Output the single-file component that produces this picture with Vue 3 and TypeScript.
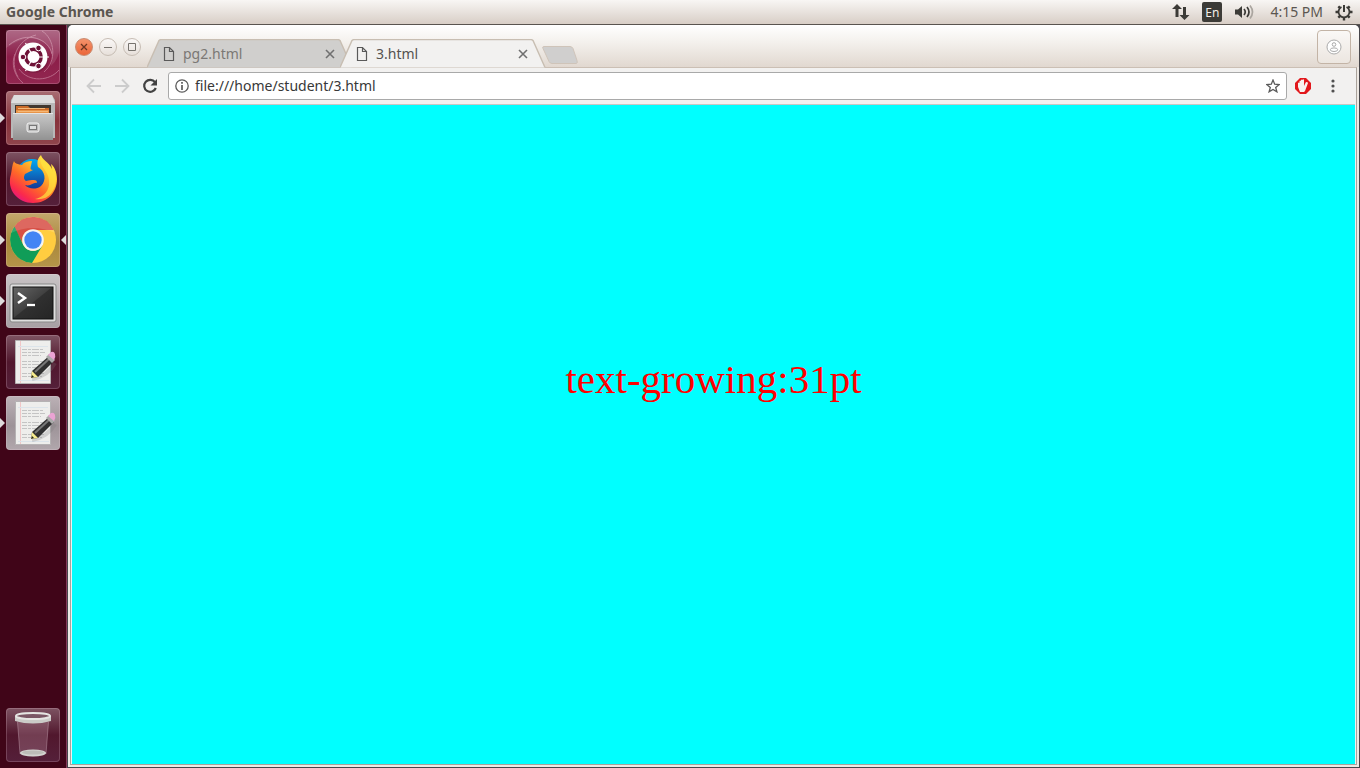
<script setup lang="ts">
import { ref } from 'vue'

interface Launcher { id: string; name: string; running: boolean }
interface Tab { id: number; title: string }

const launchers: Launcher[] = [
  { id: 'dash', name: 'Search your computer', running: false },
  { id: 'files', name: 'Files', running: true },
  { id: 'firefox', name: 'Firefox', running: false },
  { id: 'chrome', name: 'Google Chrome', running: true },
  { id: 'terminal', name: 'Terminal', running: true },
  { id: 'editor', name: 'Text Editor', running: false },
  { id: 'notes', name: 'Text Editor', running: true },
  { id: 'trash', name: 'Trash', running: false },
]
const tabs: Tab[] = [
  { id: 1, title: 'pg2.html' },
  { id: 2, title: '3.html' },
]
const activeTab = ref(2)
const address = ref('file:///home/student/3.html')
const fontPoints = ref(31)
</script>

<template>
  <div class="desktop">
    <header class="panel">
      <span class="app-name">Google Chrome</span>
      <div class="indicators">
        <button class="indicator" aria-label="Network">
          <svg width="18" height="18" viewBox="0 0 18 18" fill="#3c3b37"><path d="M5 1 10 6H6.500v8h-3V6H0zM12.500 17 7.500 12H11V4h3v8h3.500z" /></svg>
        </button>
        <button class="indicator lang" aria-label="Keyboard layout">En</button>
        <button class="indicator" aria-label="Sound">
          <svg width="20" height="16" viewBox="0 0 20 16" fill="none" stroke-width="1.700">
            <path d="M1 5.500h3L8 2v12l-4-3.500H1z" fill="#3c3b37" />
            <path d="M10 5q2.500 3 0 6M13 3q4 5 0 10" stroke="#3c3b37" /><path d="M16 1.500q5 6.500 0 13" stroke="#aaa59f" />
          </svg>
        </button>
        <button class="indicator clock">4:15 PM</button>
        <button class="indicator" aria-label="Session">
          <svg width="18" height="18" viewBox="0 0 18 18" fill="none" stroke="#3c3b37">
            <path d="M6.500 4a5.500 5.500 0 1 0 5 0" stroke-width="1.800" />
            <path d="M9 2v7" stroke-width="2" />
            <path d="M3.300 3.300 5.200 5.200M14.700 3.300 12.800 5.200M.500 9h3M14.500 9h3M3.300 14.700 5.200 12.800M14.700 14.700 12.800 12.800M9 14.500v3" stroke-width="2.400" />
          </svg>
        </button>
      </div>
    </header>

    <div class="workspace">
      <nav class="launcher" aria-label="Launcher">
        <button v-for="item in launchers" :key="item.id" class="tile" :class="[item.id, { running: item.running, focused: item.id === 'chrome' }]" :aria-label="item.name">
          <svg v-if="item.id === 'dash'" viewBox="0 0 54 54">
            <g fill="none" stroke="#ffdde9" stroke-width="1" opacity=".36">
              <path d="M12 47C3 31 10 10 30 5" /><path d="M3 15C21 0 43 9 46 24" /><path d="M17 53C8 46 5 33 9 24" /><path d="M53 40C44 51 23 53 13 39" /><path d="M36 1C49 9 51 31 38 42" />
            </g>
            <path d="M0 18Q25 0 41 15Q48 24 45 36Q54 28 54 14V0H0z" fill="#fff" opacity=".12" />
            <circle cx="28" cy="28.500" r="14.500" fill="#4a0b25" opacity=".25" />
            <circle cx="27" cy="27" r="14.500" fill="#fff" />
            <circle cx="27.500" cy="27" r="7.700" fill="none" stroke="#6e1237" stroke-width="3.400" />
            <path d="M27.500 27H43M27.500 27 19.500 13M27.500 27 19.500 41" stroke="#fff" stroke-width="1.200" />
            <g fill="#6e1237" stroke="#fff" stroke-width="1"><circle cx="17" cy="27" r="2.800" /><circle cx="32.500" cy="18" r="2.800" /><circle cx="32.500" cy="36" r="2.800" /></g>
          </svg>
          <svg v-else-if="item.id === 'files'" viewBox="0 0 54 54">
            <defs><linearGradient id="cab" x2="0" y2="1"><stop stop-color="#c9c9c9" /><stop offset="1" stop-color="#929292" /></linearGradient></defs>
            <path d="M8 4h38l3 5v38H5V9z" fill="#b8b8b8" /><path d="M8 4h38l3 8H5z" fill="#dedede" />
            <path d="M9 14h36v9H9z" fill="#41372f" />
            <path d="M10 15h12l2 2h19v6H10z" fill="#c96a28" /><path d="M10 19h33v4H10z" fill="#e89448" /><path d="M12 17.500h27M12 20.500h30" stroke="#f5b877" />
            <path d="M7 22h40v27H7z" fill="url(#cab)" /><path d="M7 22.500h40" stroke="#e4e4e4" />
            <rect x="21" y="32" width="12" height="9" rx="2" fill="#bbb" stroke="#f4f4f4" /><rect x="23.500" y="34.500" width="7" height="4" fill="#ddd" stroke="#777" />
          </svg>
          <svg v-else-if="item.id === 'firefox'" viewBox="0 0 54 54">
            <defs>
              <linearGradient id="fox" x1=".85" y1="0" x2=".15" y2=".95"><stop stop-color="#fff44f" /><stop offset=".35" stop-color="#ffb52a" /><stop offset=".6" stop-color="#ff6a28" /><stop offset=".85" stop-color="#fb2a4c" /><stop offset="1" stop-color="#e31587" /></linearGradient>
              <linearGradient id="globe" x2="0" y2="1"><stop stop-color="#00aaf4" /><stop offset="1" stop-color="#182f8d" /></linearGradient>
            </defs>
            <circle cx="26" cy="23" r="16" fill="url(#globe)" />
            <path d="M35 3C31 7 31 11 32 15C39 19 41 28 35 34C30 38 22 37 19 33C25 35 27 30 31 31C31 27 27 28 20 29C17 27 18 24 19 22L27 18C23 18 25 15 26 9C22 9 18 10 16 13C12 12 9 12 8 9C6 13 6 17 5 22C0 38 12 51 27 51C42 51 51 40 51 27C51 20 48 14 45 12L46 17C43 10 36 8 35 3Z" fill="url(#fox)" />
            <path d="M35 4C32 17 45 18 43 33C42 41 35 46 29 47C42 49 50 39 50 27C50 20 48 15 46 14L47 20C44 12 36 9 35 4Z" fill="#ffe340" opacity=".7" />
          </svg>
          <svg v-else-if="item.id === 'chrome'" viewBox="0 0 54 54">
            <circle cx="27" cy="27" r="23" fill="#ffcd40" />
            <path d="M8 14A23 23 0 0 1 47.800 17H27A10 10 0 0 0 17 31z" fill="#d85046" />
            <path d="M8.500 13.500A23 23 0 0 0 26 50L36.500 32.500A11 11 0 0 1 17.500 32.500z" fill="#109d58" />
            <path d="M5 20A23 23 0 0 1 49 20Q27 10 5 20z" fill="#fff" opacity=".14" />
            <circle cx="27" cy="27" r="10.800" fill="#f4f4f4" /><circle cx="27" cy="27" r="8.700" fill="#4285f4" />
          </svg>
          <svg v-else-if="item.id === 'terminal'" viewBox="0 0 54 54">
            <defs><linearGradient id="screen" x2="1" y2="1"><stop stop-color="#666" /><stop offset=".48" stop-color="#414141" /><stop offset=".5" stop-color="#303030" /><stop offset="1" stop-color="#252525" /></linearGradient></defs>
            <rect x="4" y="10" width="46" height="38" rx="2" fill="#dedede" stroke="#898989" /><rect x="7" y="13" width="40" height="32" fill="url(#screen)" stroke="#111" />
            <path d="m12 19 7 5-7 5" fill="none" stroke="#fff" stroke-width="2.500" /><path d="M21 31h8" stroke="#fff" stroke-width="2.300" />
          </svg>
          <svg v-else-if="item.id === 'editor' || item.id === 'notes'" viewBox="0 0 54 54">
            <path d="M9.500 5.500h35v43h-35z" fill="#eeeeec" stroke="#b5b2b3" />
            <path d="M14.500 6v42" stroke="#f0c6c6" /><path d="M12 11.500h30M12 45.500h31" stroke="#dce4ea" />
            <path d="M16 14.500h21M16 17.500h23M16 20.500h19M16 26.500h23M16 29.500h20M16 32.500h22M16 38.500h22M16 41.500h20" stroke="#c4c4c4" stroke-dasharray="5 1 3 1 7 1" />
            <path d="M26 44Q42 41 49 28" stroke="#777" stroke-width="4" opacity=".25" fill="none" />
            <path d="m25 43 1-7 17-15 5 5-16 16z" fill="#303030" /><path d="m29 37 15-14" stroke="#777" stroke-width="2" />
            <path d="m25 43 1-7 6 6z" fill="#f7ec8b" /><path d="m25 43 1-3 2 2z" fill="#222" />
            <path d="m40 22 3-3 6 6-3 3z" fill="#aaa" /><path d="m42 20 3-3q3-1 4 2t-1 6z" fill="#eaa3d4" />
          </svg>
          <svg v-else viewBox="0 0 54 54">
            <path d="M11 10 14 46Q27 51 40 46L43 10z" fill="#d8aebf" opacity=".25" /><path d="M11.500 14 14 46M42.500 14 40 46" stroke="#d9bcc8" opacity=".35" />
            <ellipse cx="27" cy="45" rx="13" ry="3.500" fill="#d3d3d0" /><ellipse cx="27" cy="44.500" rx="11" ry="2" fill="#bcbcb8" />
            <path d="M9 8q18 6 36 0v5q-18 5-36 0z" fill="#cbcbc8" /><ellipse cx="27" cy="8" rx="17" ry="3" fill="#7a5664" stroke="#e5e5e2" stroke-width="2" />
          </svg>
        </button>
      </nav>

      <section class="window" aria-label="Google Chrome">
        <div class="tab-strip">
          <div class="window-controls">
            <button class="control close" aria-label="Close window"><svg width="16" height="16" viewBox="0 0 16 16"><path d="m5 5 6 6M11 5l-6 6" stroke="#6b3521" stroke-width="1.300" /></svg></button>
            <button class="control" aria-label="Minimize"><svg width="16" height="16" viewBox="0 0 16 16"><path d="M4 8.500h8" stroke="#77736e" /></svg></button>
            <button class="control" aria-label="Maximize"><svg width="16" height="16" viewBox="0 0 16 16"><path d="M4.500 4.500h7v7h-7z" fill="none" stroke="#77736e" /></svg></button>
          </div>
          <div class="tabs">
            <div v-for="tab in tabs" :key="tab.id" class="tab" :class="{ active: tab.id === activeTab }">
              <svg class="tab-shape" viewBox="0 0 206 29" preserveAspectRatio="none"><path d="M0 28.500 12 1.500q1-1 2-1H191q1 0 2 1L205 28.500" /></svg>
              <button class="tab-main" @click="activeTab = tab.id">
                <svg width="12" height="16" viewBox="0 0 12 16"><path d="M1.500 1.500h5l4 4v9h-9zM6.500 1.500v4h4" fill="none" stroke="#5a5a5a" stroke-width="1.200" /></svg>
                <span>{{ tab.title }}</span>
              </button>
              <button class="tab-close" :aria-label="`Close ${tab.title}`"><svg width="10" height="10" viewBox="0 0 10 10"><path d="m1 1 8 8M9 1 1 9" stroke="#707070" stroke-width="1.600" /></svg></button>
            </div>
            <button class="new-tab" aria-label="New tab"><svg width="36" height="18" viewBox="0 0 36 18"><path d="M2 .500h26q2 0 3 2l4 12q1 3-1 3H10q-2 0-3-2L1 2.500q-1-2 1-2" fill="#d0cfce" stroke="#cfc4b9" /></svg></button>
          </div>
          <button class="profile" aria-label="Profile"><svg width="16" height="16" viewBox="0 0 16 16" fill="none" stroke="#aaa"><circle cx="8" cy="8" r="7" fill="#fff" /><circle cx="8" cy="5.500" r="1.800" /><ellipse cx="8" cy="10.700" rx="3.700" ry="1.800" /></svg></button>
        </div>

        <div class="browser">
          <div class="toolbar">
            <button class="tool" aria-label="Back"><svg width="16" height="16" viewBox="0 0 16 16"><path d="M15 8H2M8 1.500 1.500 8 8 14.500" fill="none" stroke="#ccc" stroke-width="1.800" /></svg></button>
            <button class="tool" aria-label="Forward"><svg width="16" height="16" viewBox="0 0 16 16"><path d="M1 8h13M8 1.500 14.500 8 8 14.500" fill="none" stroke="#ccc" stroke-width="1.800" /></svg></button>
            <button class="tool" aria-label="Reload"><svg width="16" height="16" viewBox="0 0 16 16"><path d="M13 4.200A6 6 0 1 0 13.800 10" fill="none" stroke="#424242" stroke-width="2.200" /><path d="M15 1v6.500H8.500z" fill="#424242" /></svg></button>
            <div class="omnibox">
              <button class="info" aria-label="Page information"><svg width="14" height="14" viewBox="0 0 14 14"><circle cx="7" cy="7" r="6.200" fill="none" stroke="#5a5a5a" stroke-width="1.300" /><path d="M7 6v5M7 3v1.700" stroke="#5a5a5a" stroke-width="1.700" /></svg></button>
              <input v-model="address" type="text" aria-label="Address" spellcheck="false" />
              <button class="star" aria-label="Bookmark this page"><svg width="14" height="14" viewBox="0 0 14 14"><path d="m7 1 1.700 4.200 4.500.3-3.500 2.900 1.200 4.400L7 10.400l-3.900 2.400 1.200-4.400L.800 5.500l4.500-.3z" fill="none" stroke="#5a5a5a" stroke-width="1.300" /></svg></button>
            </div>
            <button class="tool adblock" aria-label="Ad blocker"><svg width="16" height="16" viewBox="0 0 16 16"><path d="M5 0h6l5 5v6l-5 5H5l-5-5V5z" fill="#e2181c" /><path d="M5 14 3 9V5q1-1 1.500 0V3q1-1 1.500 0V2q1-1 1.500 0V1.800q1-1 1.500 0V8l2-4q2 0 2 1l-3 8-1 1z" fill="#f8f2ef" /></svg></button>
            <button class="tool" aria-label="Menu"><svg width="4" height="14" viewBox="0 0 4 14" fill="#505050"><circle cx="2" cy="2" r="1.600" /><circle cx="2" cy="7" r="1.600" /><circle cx="2" cy="12" r="1.600" /></svg></button>
          </div>
          <main class="page"><p>text-growing:{{ fontPoints }}pt</p></main>
        </div>
      </section>
    </div>
  </div>
</template>

<style>
body { margin: 0; }
</style>
<style scoped>
.desktop { height: 100vh; display: flex; flex-direction: column; background: #47464a; font-family: "Noto Sans", sans-serif; overflow: hidden; }
button { border: 0; padding: 0; margin: 0; background: none; font: inherit; color: inherit; display: flex; align-items: center; justify-content: center; }
svg { display: block; flex: none; }
.panel { height: 24px; flex: none; display: flex; align-items: center; justify-content: space-between; padding: 0 7px 0 6px; border-bottom: 1px solid #59544f; background: linear-gradient(#f8f6f4, #d8cec6); color: #5b5650; }
.app-name { font-size: 14px; font-weight: 700; line-height: 24px; }
.indicators { display: flex; align-items: center; gap: 12px; height: 24px; }
.lang { width: 20px; height: 20px; border-radius: 2px; background: #3c3b37; color: #f2eeea; font-size: 12px; }
.clock { font-size: 14px; line-height: 24px; margin-left: 4px; }
.workspace { flex: 1; min-height: 0; display: flex; }
.launcher { width: 66px; box-sizing: border-box; flex: none; display: flex; flex-direction: column; align-items: center; gap: 7px; padding: 5px 0 6px; background: #400518; box-shadow: 1px 0 #87395a; margin-right: 2px; }
.tile { width: 54px; height: 54px; flex: none; position: relative; border-radius: 4px; background: linear-gradient(#7d5362, #51172d 50%, #55203a); box-shadow: inset 0 0 0 1px rgba(255, 220, 235, .2); }
.tile svg { width: 54px; height: 54px; }
.tile.dash { background: linear-gradient(#a35475, #8c1e49 50%, #922750); }
.tile.files { background: linear-gradient(#a86d73, #87323b 55%, #90454c); }
.tile.chrome { background: linear-gradient(#c4a76c, #aa893d 55%, #b59549); }
.tile.terminal { background: linear-gradient(#c8c3c5, #a7a0a4); }
.tile.notes { background: linear-gradient(#bcb1b6, #9d9398 55%, #b1a7ac); }
.tile.trash { margin-top: auto; }
.running::before { content: ""; position: absolute; left: -6px; top: 22px; border: 5px solid transparent; border-left-color: #dedbdc; border-right: 0; }
.focused::after { content: ""; position: absolute; right: -6px; top: 22px; border: 5px solid transparent; border-right-color: #dedbdc; border-left: 0; }
.window { flex: 1; min-width: 0; display: flex; flex-direction: column; margin: 0 1px 1px 0; border-radius: 5px 5px 0 0; background: #eee9e4; overflow: hidden; }
.tab-strip { height: 42px; flex: none; display: flex; background: linear-gradient(#fff, #f4f1ed 40%, #e1d8d0); }
.window-controls { display: flex; gap: 6px; padding: 13px 6px 0 7px; }
.control { width: 18px; height: 18px; box-sizing: border-box; border: 1px solid #c7bdb4; border-radius: 50%; background: linear-gradient(#faf8f7, #e7e0da); }
.control.close { background: linear-gradient(#f4936c, #eb6538); border-color: #c98a6f; }
.tabs { display: flex; flex: 1; min-width: 0; padding-top: 14px; }
.tab { position: relative; z-index: 1; width: 206px; height: 29px; margin-right: -13px; display: flex; align-items: center; box-sizing: border-box; padding: 0 18px 0 16px; color: #7b7875; }
.tab.active { z-index: 2; color: #55524f; }
.tab-shape { position: absolute; inset: 0; width: 100%; height: 100%; fill: #d0cfcd; stroke: #c8beb2; stroke-width: 1.4; }
.active .tab-shape { fill: #f2f1f0; }
.tab-main { position: relative; flex: 1; justify-content: flex-start; gap: 8px; font-size: 14px; line-height: 20px; }
.tab-close { position: relative; width: 10px; height: 10px; }
.new-tab { width: 36px; height: 18px; margin: 7px 0 0 9px; }
.profile { width: 34px; height: 34px; margin: 5px 8px 0 0; box-sizing: border-box; border: 1px solid #c3b4a6; border-radius: 4px; background: linear-gradient(#faf8f6, #ece6e0); }
.browser { flex: 1; min-height: 0; display: flex; flex-direction: column; margin: 0 2px 2px; border: 1px solid #aaa39c; border-top-color: #cbbfb4; background: #f2f1f0; padding: 0 1px; }
.toolbar { height: 36px; flex: none; display: flex; align-items: center; padding: 0 8px; border-bottom: 1px solid #c8c6c4; }
.tool { width: 28px; height: 28px; }
.omnibox { flex: 1; min-width: 0; height: 28px; box-sizing: border-box; margin-left: 4px; border: 1px solid #a9a9a9; border-radius: 3px; background: #fff; display: flex; align-items: center; padding: 0 6px; }
.omnibox input { flex: 1; min-width: 0; height: 24px; box-sizing: border-box; border: 0; padding: 0 6px 2px; outline: 0; background: transparent; font: 14px "Noto Sans", sans-serif; color: #383838; }
.adblock { width: 32px; }
.page { flex: 1; min-height: 0; display: flex; justify-content: center; background: #0ff; align-items: flex-start; padding-top: 250px; }
.page p { margin: 0; font: 41px/48px "Liberation Serif", serif; color: #f00; }
</style>
